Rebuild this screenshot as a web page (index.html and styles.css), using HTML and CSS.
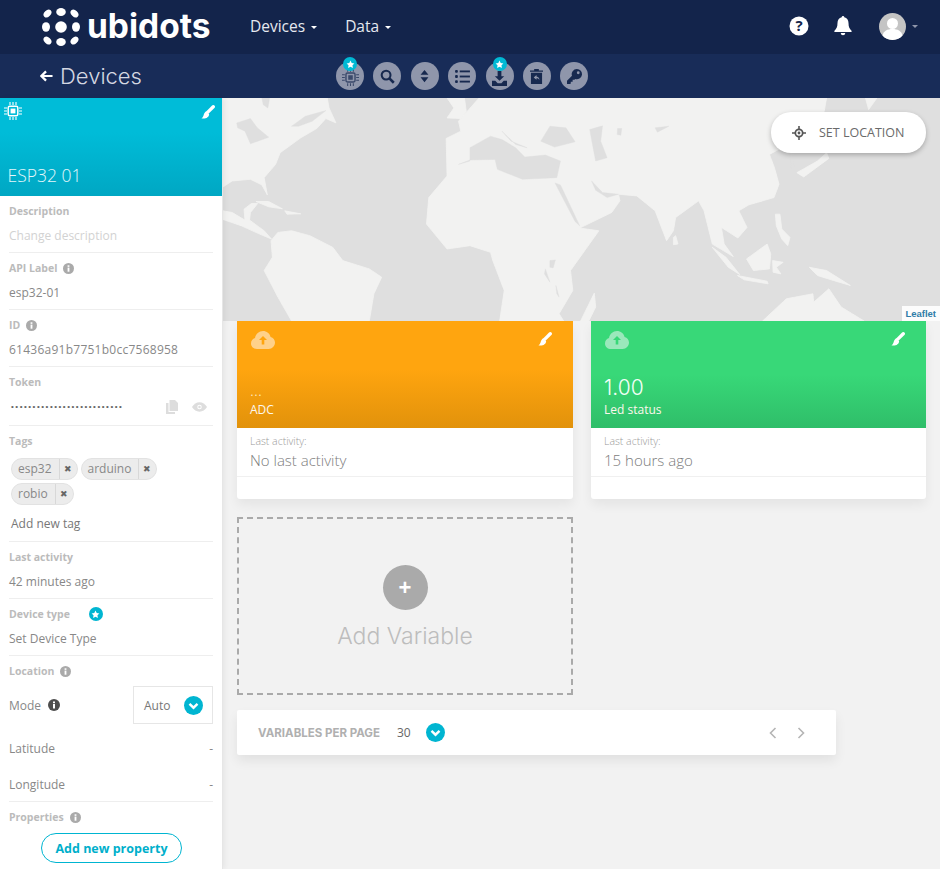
FILE: index.html
```html
<!DOCTYPE html>
<html lang="en">
<head>
<meta charset="utf-8">
<title>Devices</title>
<link rel="stylesheet" href="styles.css">
</head>
<body>
<svg class="defs" width="0" height="0" aria-hidden="true">
  <symbol id="brush" viewBox="0 0 16 16"><path d="M14 2L7.500 8.500" stroke="#fff" stroke-width="3.800" stroke-linecap="round" fill="none"/><path d="M5.800 7L9.300 10.500C9.300 13.800 5 16.500 .5 15.200 2.700 14 2.800 12 3.400 10.300 3.900 8.900 4.800 7.800 5.800 7Z" fill="#fff"/></symbol>
  <symbol id="info" viewBox="0 0 12 12"><circle cx="6" cy="6" r="6"/><rect x="5" y="5" width="2" height="4.500" fill="#fff"/><rect x="5" y="2.500" width="2" height="1.700" fill="#fff"/></symbol>
  <symbol id="star" viewBox="0 0 12 12"><path d="M6 .8l1.600 3.300 3.600.5-2.600 2.500.6 3.600L6 9l-3.200 1.700.6-3.600L.8 4.600l3.600-.5z"/></symbol>
  <symbol id="chev" viewBox="0 0 19 19"><circle cx="9.500" cy="9.500" r="9.500" fill="#00b5d1"/><path d="M5.500 7.800l4 3.900 4-3.900" fill="none" stroke="#fff" stroke-width="2.400"/></symbol>
  <symbol id="chip" viewBox="0 0 18 18"><rect x="4.200" y="4.200" width="9.600" height="9.600" rx="1.500" fill="none" stroke="currentColor" stroke-width="1.500"/><rect x="6.600" y="6.600" width="4.800" height="4.800" fill="currentColor"/><path d="M6 0v3M9 0v3M12 0v3M6 15v3M9 15v3M12 15v3M0 6h3M0 9h3M0 12h3M15 6h3M15 9h3M15 12h3" stroke="currentColor" stroke-width="1.100"/></symbol>
  <symbol id="cloud" viewBox="0 0 24 18"><path d="M6 18c-3.300 0-6-2.500-6-5.600 0-2.500 1.700-4.600 4-5.300C4.700 3 8 0 12 0c3.700 0 6.800 2.500 7.600 5.900 2.600.6 4.400 2.900 4.400 5.700 0 3.500-2.800 6.400-6.300 6.400z"/></symbol>
</svg>

<header class="topbar">
  <div class="logo">
    <svg class="logo-dots" viewBox="0 0 40 40" width="40" height="40" fill="#fff">
      <ellipse cx="6.500" cy="6.500" rx="4.500" ry="3.200" transform="rotate(-45 6.500 6.500)"/>
      <ellipse cx="20" cy="5" rx="4.800" ry="4"/>
      <ellipse cx="33.500" cy="6.500" rx="4.500" ry="3.200" transform="rotate(45 33.500 6.500)"/>
      <ellipse cx="5" cy="20" rx="4" ry="4.800"/>
      <circle cx="20" cy="20" r="5.800"/>
      <ellipse cx="35" cy="20" rx="4" ry="4.800"/>
      <ellipse cx="6.500" cy="33.500" rx="4.500" ry="3.200" transform="rotate(45 6.500 33.500)"/>
      <ellipse cx="20" cy="35" rx="4.800" ry="4"/>
      <ellipse cx="33.500" cy="33.500" rx="4.500" ry="3.200" transform="rotate(-45 33.500 33.500)"/>
    </svg>
    <span class="logo-text">ubidots</span>
  </div>
  <nav class="mainnav">
    <a class="navitem">Devices<i class="caret"></i></a>
    <a class="navitem">Data<i class="caret"></i></a>
  </nav>
  <div class="topright">
    <svg class="top-help" viewBox="0 0 20 20" width="20" height="20"><circle cx="10" cy="10" r="9.500" fill="#fff"/><text x="10" y="15" class="help-q">?</text></svg>
    <svg class="top-bell" viewBox="0 0 18 20" width="18" height="20" fill="#fff"><path d="M9 0c-.8 0-1.300.6-1.300 1.300C5 2 3.500 4.200 3.500 7c0 4.200-1.200 6-3 7.700-.4.400-.2 1.300.6 1.300h15.800c.8 0 1-.9.600-1.300-1.800-1.700-3-3.500-3-7.700 0-2.800-1.500-5-4.200-5.700C10.300.6 9.800 0 9 0zM6.800 17c0 1.300 1 2.300 2.200 2.300s2.200-1 2.200-2.300z"/></svg>
    <div class="avatar">
      <svg viewBox="0 0 27 27" width="27" height="27"><circle cx="13.500" cy="13.500" r="13.500" fill="#c4c4c4"/><circle cx="13.500" cy="10.500" r="5.500" fill="#fff"/><path d="M3.500 22.500c1-4.500 5-6.500 10-6.500s9 2 10 6.500a13.500 13.500 0 0 1-20 0z" fill="#fff"/></svg>
      <i class="caret caret-muted"></i>
    </div>
  </div>
</header>

<div class="subbar">
  <div class="back">
    <svg viewBox="0 0 14 12" width="13" height="12"><path d="M6.500 1L1.500 6l5 5M2 6h11.500" fill="none" stroke="#fff" stroke-width="2.400"/></svg>
    <span class="back-title">Devices</span>
  </div>
  <div class="tools">
    <span class="tool">
      <svg class="tool-ico tool-chip" width="17" height="17"><use href="#chip"/></svg>
      <span class="badge"><svg width="9" height="9" fill="#fff"><use href="#star"/></svg></span>
    </span>
    <span class="tool"><svg class="tool-ico" viewBox="0 0 16 16" width="15" height="15"><circle cx="6.500" cy="6.500" r="4.700" fill="none" stroke="currentColor" stroke-width="2.200"/><path d="M10 10l4.700 4.700" stroke="currentColor" stroke-width="2.800"/></svg></span>
    <span class="tool"><svg class="tool-ico" viewBox="0 0 10 16" width="9" height="14" fill="currentColor"><path d="M5 1l4.500 5.500h-9zM5 15L.5 9.500h9z"/></svg></span>
    <span class="tool"><svg class="tool-ico" viewBox="0 0 16 14" width="15" height="13" fill="currentColor"><rect x="0" y="0" width="3" height="3" rx="1"/><rect x="0" y="5.500" width="3" height="3" rx="1"/><rect x="0" y="11" width="3" height="3" rx="1"/><rect x="5" y=".5" width="11" height="2"/><rect x="5" y="6" width="11" height="2"/><rect x="5" y="11.500" width="11" height="2"/></svg></span>
    <span class="tool">
      <svg class="tool-ico tool-down" viewBox="0 0 16 16" width="15" height="15" fill="currentColor"><path d="M6 0h4v5.500h3L8 10.500 3 5.500h3zM0 10.500h3.500L6 13h4l2.500-2.500H16V16H0z"/></svg>
      <span class="badge"><svg width="9" height="9" fill="#fff"><use href="#star"/></svg></span>
    </span>
    <span class="tool"><svg class="tool-ico" viewBox="0 0 14 16" width="13" height="15" fill="currentColor"><path d="M0 1.500h4.500V0h5v1.500H14V3H0zM1 4h12v12H1zM7 6.500L4 9l3 2.500V10c1.500 0 2.500.5 3 2 .3-2.200-.8-3.700-3-4z" fill-rule="evenodd"/></svg></span>
    <span class="tool"><svg class="tool-ico" viewBox="0 0 16 16" width="15" height="15" fill="currentColor"><path d="M10.500 0a5.500 5.500 0 0 0-5.200 7.300L0 12.600V16h3.400l.6-.6V13.500h2v-2h2l.7-.8A5.500 5.500 0 1 0 10.500 0zm1.500 5.500a1.500 1.500 0 1 1 0-3 1.500 1.500 0 0 1 0 3z" fill-rule="evenodd"/></svg></span>
  </div>
</div>

<div class="page">
  <aside class="sidebar">
    <div class="device-head">
      <div class="head-icons">
        <svg class="head-chip" width="18" height="18"><use href="#chip"/></svg>
        <svg class="brush" width="14" height="14"><use href="#brush"/></svg>
      </div>
      <div class="device-name">ESP32 01</div>
    </div>
    <div class="fields">
      <section class="field">
        <div class="label">Description</div>
        <div class="value placeholder">Change description</div>
      </section>
      <section class="field">
        <div class="label">API Label <svg class="info" width="11" height="11"><use href="#info"/></svg></div>
        <div class="value">esp32-01</div>
      </section>
      <section class="field">
        <div class="label">ID <svg class="info" width="11" height="11"><use href="#info"/></svg></div>
        <div class="value value-id">61436a91b7751b0cc7568958</div>
      </section>
      <section class="field field-token">
        <div class="label">Token</div>
        <div class="value token">
          <span class="dots">••••••••••••••••••••••••••</span>
          <svg class="tok-copy" viewBox="0 0 12 14" width="12" height="14" fill="#ddd"><path d="M3.500 0H9l3 3v8H3.500z"/><path d="M0 3h2.500v9h6.500v2H0z"/></svg>
          <svg class="tok-eye" viewBox="0 0 16 10" width="15" height="10"><path d="M0 5c2-3 4.800-5 8-5s6 2 8 5c-2 3-4.800 5-8 5S2 8 0 5z" fill="#ddd"/><circle cx="8" cy="5" r="2.400" fill="#fff"/><circle cx="8" cy="5" r="1.300" fill="#ddd"/></svg>
        </div>
      </section>
      <section class="field field-tags">
        <div class="label">Tags</div>
        <div class="tags">
          <span class="tag"><span class="tag-name">esp32</span><span class="tag-x">✖</span></span>
          <span class="tag"><span class="tag-name">arduino</span><span class="tag-x">✖</span></span>
          <span class="tag"><span class="tag-name">robio</span><span class="tag-x">✖</span></span>
        </div>
        <div class="value addtag">Add new tag</div>
      </section>
      <section class="field">
        <div class="label">Last activity</div>
        <div class="value">42 minutes ago</div>
      </section>
      <section class="field">
        <div class="label">Device type <span class="type-star"><svg width="9" height="9" fill="#fff"><use href="#star"/></svg></span></div>
        <div class="value">Set Device Type</div>
      </section>
      <section class="field">
        <div class="label">Location <svg class="info" width="11" height="11"><use href="#info"/></svg></div>
        <div class="mode-row">
          <span class="value mode-name">Mode <svg class="info info-dark" width="12" height="12"><use href="#info"/></svg></span>
          <span class="mode-select"><span>Auto</span><svg width="19" height="19"><use href="#chev"/></svg></span>
        </div>
        <div class="coord"><span>Latitude</span><span>-</span></div>
        <div class="coord"><span>Longitude</span><span>-</span></div>
      </section>
      <section class="field field-props">
        <div class="label">Properties <svg class="info" width="11" height="11"><use href="#info"/></svg></div>
        <button class="add-prop">Add new property</button>
      </section>
    </div>
  </aside>

  <main class="main">
    <div class="map">
      <svg class="map-svg" viewBox="0 0 1568 672" preserveAspectRatio="none">
        <g class="land">
          <path d="M0 0H228L232 30 247 75 225 62 205 92 170 120 125 165 115 200 90 240 97 292 85 262 60 245 20 250 0 268Z"/>
          <path d="M0 340L20 345 48 368 46 335 62 318 76 318 60 345 58 368 90 400 106 425 80 410 40 385 0 366Z"/>
          <path d="M72 312L100 312 130 334 100 328Z"/>
          <path d="M135 340L170 349 140 350Z"/>
          <path d="M105 430L120 405 150 400 190 415 240 450 262 490 320 515 347 540 330 590 320 672H150L120 600 90 520 108 480Z"/>
          <path d="M490 0H528L532 40 522 62 490 60 505 30Z"/>
          <path d="M560 0H1320L1312 60 1262 110 1222 150 1195 170 1206 210 1216 260 1205 300 1150 322 1128 340 1146 390 1126 422 1090 390 1096 440 1116 478 1070 440 1052 340 1040 310 990 360 985 400 970 430 945 340 905 295 865 290 868 310 850 345 780 392 822 400 760 520 765 580 735 650 745 672H605L615 580 590 490 585 465 540 445 490 455 445 380 450 300 490 235 488 122 520 100 515 70Z"/>
          <path d="M1405 0H1430L1412 35Z"/>
          <path d="M1255 225L1300 190 1320 165 1325 182 1270 238Z"/>
          <path d="M1070 450L1100 480 1130 532 1105 510Z"/>
          <path d="M1125 535L1190 552 1192 560 1140 548Z"/>
          <path d="M1145 485L1190 440 1198 470 1195 515 1160 520Z"/>
          <path d="M1202 490L1225 495 1210 510 1220 530 1203 525Z"/>
          <path d="M1208 350L1218 350 1222 395 1240 420 1235 445 1222 425 1210 385Z"/>
          <path d="M1282 510L1320 520 1372 565 1335 550 1300 535Z"/>
          <path d="M1180 672L1232 605 1290 590 1292 615 1325 575 1352 630 1402 672Z"/>
          <path d="M782 672L812 588 815 630 800 672Z"/>
          <path d="M985 420L990 415 995 440 985 442Z"/>
        </g>
        <g class="water">
          <path d="M515 200L540 190 540 150 585 115 610 125 640 150 660 178 705 172 738 190 730 240 655 245 600 215 595 185 540 187Z"/>
          <path d="M610 100L640 140 665 150 630 130Z"/>
          <path d="M695 130L715 85 750 90 770 132 725 148Z"/>
          <path d="M802 95L830 84 826 130 840 180 815 190 808 140Z"/>
          <path d="M863 92L872 92 870 112 862 110Z"/>
          <path d="M945 90L975 85 950 103Z"/>
          <path d="M726 256L738 262 780 385 770 372Z"/>
          <path d="M806 250L830 285 865 290 840 300 815 278Z"/>
          <path d="M715 490L727 488 722 512 715 510Z"/>
          <path d="M728 565L735 600 730 590ZM705 515L715 555 703 530Z"/>
          <path d="M30 75L60 62 75 90 100 118 60 138 48 100 32 90Z"/>
          <path d="M150 85L180 55 225 38 195 70 165 85Z"/>
          <path d="M1240 170L1250 205 1243 212Z"/>
          <path d="M85 0H102L98 30 88 20Z"/>
        </g>
      </svg>
      <button class="set-loc">
        <svg viewBox="0 0 16 16" width="14" height="14"><circle cx="8" cy="8" r="4.200" fill="none" stroke="#555" stroke-width="2"/><circle cx="8" cy="8" r="1.600" fill="#555"/><path d="M8 0v3.500M8 12.500V16M0 8h3.500M12.500 8H16" stroke="#555" stroke-width="1.800"/></svg>
        <span>SET LOCATION</span>
      </button>
      <span class="leaflet">Leaflet</span>
    </div>

    <div class="cards">
      <article class="card">
        <div class="card-head head-orange">
          <div class="head-icons">
            <svg class="var-cloud" viewBox="0 0 24 18" width="24" height="18"><use href="#cloud" fill="#ffd18a" width="24" height="18"/><path d="M12 5l-4 4h2.700v4.500h2.600V9H16z" fill="#ffa50f"/></svg>
            <svg class="brush" width="14" height="14"><use href="#brush"/></svg>
          </div>
          <div class="var-value var-dots">...</div>
          <div class="var-name">ADC</div>
        </div>
        <div class="card-body">
          <div class="la-label">Last activity:</div>
          <div class="la-value">No last activity</div>
        </div>
        <div class="card-foot"></div>
      </article>
      <article class="card">
        <div class="card-head head-green">
          <div class="head-icons">
            <svg class="var-cloud" viewBox="0 0 24 18" width="24" height="18"><use href="#cloud" fill="#9ae8bb" width="24" height="18"/><path d="M12 5l-4 4h2.700v4.500h2.600V9H16z" fill="#38d878"/></svg>
            <svg class="brush" width="14" height="14"><use href="#brush"/></svg>
          </div>
          <div class="var-value">1.00</div>
          <div class="var-name">Led status</div>
        </div>
        <div class="card-body">
          <div class="la-label">Last activity:</div>
          <div class="la-value">15 hours ago</div>
        </div>
        <div class="card-foot"></div>
      </article>
      <div class="add-var">
        <span class="add-circle">+</span>
        <span class="add-text">Add Variable</span>
      </div>
    </div>

    <div class="pager">
      <span class="pager-label">VARIABLES PER PAGE</span>
      <span class="pager-num">30</span>
      <svg width="19" height="19"><use href="#chev"/></svg>
      <span class="pager-arrows">
        <svg viewBox="0 0 8 12" width="8" height="12"><path d="M6.500 1L1.500 6l5 5" fill="none" stroke="#b5b5b5" stroke-width="1.600"/></svg>
        <svg viewBox="0 0 8 12" width="8" height="12"><path d="M1.500 1l5 5-5 5" fill="none" stroke="#b5b5b5" stroke-width="1.600"/></svg>
      </span>
    </div>
  </main>
</div>
</body>
</html>
```

FILE: styles.css
```css
* { box-sizing: border-box; }
html, body { margin: 0; height: 100%; }
body {
  width: 940px;
  height: 869px;
  overflow: hidden;
  display: flex;
  flex-direction: column;
  background: #f2f2f2;
  font-family: "Open Sans", sans-serif;
  color: #777;
}
.defs { position: absolute; }

/* top bar */
.topbar {
  height: 54px;
  flex: none;
  display: flex;
  align-items: center;
  padding: 0 0 2px 41px;
  background: #13244b;
}
.logo { display: flex; align-items: center; width: 209px; }
.logo-dots { flex: none; margin-top: 1px; }
.logo-text {
  margin-left: 6px;
  font-family: "Inter", sans-serif;
  font-weight: 700;
  font-size: 33.500px;
  line-height: 40px;
  color: #fff;
}
.mainnav { display: flex; gap: 28px; }
.navitem {
  display: flex;
  align-items: center;
  font-size: 15.500px;
  color: #e6e9f0;
}
.caret {
  display: inline-block;
  width: 0;
  height: 0;
  margin-left: 6px;
  margin-top: 2px;
  border-left: 3.500px solid transparent;
  border-right: 3.500px solid transparent;
  border-top: 3.500px solid #fff;
}
.caret-muted { border-top-color: #8f96ab; margin-top: 0; }
.topright { margin-left: auto; display: flex; align-items: center; padding-right: 22px; }
.help-q { font: 700 15px "Open Sans", sans-serif; fill: #13244b; text-anchor: middle; }
.top-bell { margin-left: 25px; }
.avatar { display: flex; align-items: center; margin-left: 27px; }

/* sub bar */
.subbar {
  height: 44px;
  flex: none;
  display: flex;
  align-items: center;
  background: #182c58;
}
.back { width: 336px; flex: none; display: flex; align-items: center; padding-left: 40px; }
.back-title {
  margin-left: 7px;
  font-family: "Inter", sans-serif;
  font-weight: 300;
  font-size: 22px;
  color: #d4d8e2;
}
.tools { display: flex; gap: 9.400px; }
.tool {
  position: relative;
  width: 28px;
  height: 28px;
  border-radius: 50%;
  background: #8f96ab;
  display: flex;
  align-items: center;
  justify-content: center;
  color: #17294f;
}
.badge {
  position: absolute;
  top: -5px;
  left: 7px;
  width: 14px;
  height: 14px;
  border-radius: 50%;
  background: #00b9d4;
  display: flex;
  align-items: center;
  justify-content: center;
}
.tool-chip { margin-top: 3px; opacity: .7; }
.tool-down { margin-top: 4px; }

/* layout */
.page { flex: 1; display: flex; min-height: 0; }
.sidebar {
  width: 223px;
  flex: none;
  background: #fff;
  border-right: 1px solid #e6e6e6;
  box-shadow: 2px 0 5px rgba(0,0,0,.05);
  position: relative;
  z-index: 1;
}
.main { flex: 1; min-width: 0; }

/* device head */
.device-head {
  height: 98px;
  padding: 4px 6px 0 4px;
  display: flex;
  flex-direction: column;
  color: #fff;
  background: linear-gradient(#00bcd8 35%, #00a7c3);
}
.head-icons { display: flex; justify-content: space-between; align-items: flex-start; }
.head-chip { color: #fff; }
.device-head .brush { margin-top: 3px; margin-right: 1px; }
.device-name {
  margin-top: auto;
  padding: 0 0 9px 3.500px;
  font-size: 17.500px;
  line-height: 24px;
  font-weight: 300;
  color: #e4f7fb;
}

/* fields */
.fields { padding: 0 9px; }
.field { padding: 7px 0; border-bottom: 1px solid #eee; }
.field-token { padding-bottom: 9px; }
.field-tags { padding-bottom: 8px; }
.field-props { border-bottom: 0; }
.label {
  display: flex;
  align-items: center;
  gap: 5px;
  height: 16px;
  font-size: 10.500px;
  font-weight: 700;
  color: #bbbbbb;
}
.info { fill: #aaa; flex: none; margin-left: 1px; }
.info-dark { fill: #4d4d4d; margin-left: 4px; vertical-align: -1px; }
.value {
  margin-top: 8px;
  font-size: 12px;
  line-height: 18px;
  color: #888888;
}
.value-id { letter-spacing: .25px; }
.placeholder { color: #d2d2d2; }
.token { display: flex; align-items: center; }
.dots { font-size: 8px; letter-spacing: 1.520px; color: #666; flex: 1; font-family: "Liberation Sans", sans-serif; padding-left: 2px; }
.tok-copy { margin-right: 14px; }
.tok-eye { margin-right: 6px; }
.tags { display: flex; flex-wrap: wrap; gap: 3px; margin: 9px 0 0 2px; width: 160px; }
.tag {
  display: inline-flex;
  height: 22px;
  border-radius: 11px;
  background: #ececec;
  border: 1px solid #e2e2e2;
  font-size: 12px;
  line-height: 20px;
  color: #888888;
  overflow: hidden;
}
.tag-name { padding: 0 7px 0 6px; border-right: 1px solid #d8d8d8; }
.tag-x { padding: 0 5px 0 4px; font-size: 9px; color: #666; }
.addtag { margin: 10px 0 0 2px; color: #777; }
.type-star {
  width: 14px;
  height: 14px;
  margin-left: 14px;
  border-radius: 50%;
  background: #00b5d1;
  display: flex;
  align-items: center;
  justify-content: center;
}
.mode-row { display: flex; align-items: center; justify-content: space-between; margin-top: 7px; height: 38px; }
.mode-name { margin-top: 1px; }
.mode-select {
  width: 80px;
  height: 38px;
  border: 1px solid #e6e6e6;
  display: flex;
  align-items: center;
  justify-content: space-between;
  padding: 0 9px 0 10px;
  font-size: 12px;
  color: #777;
}
.coord {
  display: flex;
  justify-content: space-between;
  height: 18px;
  margin-top: 18px;
  font-size: 12px;
  line-height: 18px;
  color: #888888;
}
.mode-row + .coord { margin-top: 16px; }
.add-prop {
  display: block;
  width: 141px;
  height: 30px;
  margin: 8px 0 0 32px;
  padding: 0;
  border: 1px solid #00b5d1;
  border-radius: 15px;
  background: #fff;
  font: 700 12.500px "Open Sans", sans-serif;
  color: #00afcb;
}

/* map */
.map { position: relative; height: 223px; background: #dfdfdf; overflow: hidden; }
.map-svg { display: block; width: 100%; height: 223px; filter: blur(.6px); }
.land { fill: #f2f2f1; stroke: #f2f2f1; stroke-width: 2; stroke-linejoin: round; }
.water { fill: #dfdfdf; stroke: #dfdfdf; stroke-width: 1; stroke-linejoin: round; }
.set-loc {
  position: absolute;
  top: 14px;
  right: 14px;
  width: 155px;
  height: 41px;
  padding: 0 0 0 21px;
  display: flex;
  align-items: center;
  gap: 13px;
  border: 0;
  border-radius: 20px;
  background: #fff;
  box-shadow: 0 2px 5px rgba(0,0,0,.25);
  font: 400 12.500px "Open Sans", sans-serif;
  color: #6a6a6a;
}
.leaflet {
  position: absolute;
  right: 0;
  bottom: 0;
  padding: 1px 4px 0 3px;
  height: 15px;
  font: 700 9.500px/14px "Liberation Sans", sans-serif;
  color: #2f7ca8;
  background: rgba(255,255,255,.9);
}

/* cards */
.cards {
  display: grid;
  grid-template-columns: 336px 335px;
  gap: 18px;
  padding-left: 14px;
}
.card {
  height: 178px;
  background: #fff;
  border-radius: 0 0 3px 3px;
  box-shadow: 0 6px 12px rgba(0,0,0,.06);
  display: flex;
  flex-direction: column;
}
.card-head {
  height: 107px;
  padding: 10px 21px 0 13px;
  display: flex;
  flex-direction: column;
  color: #fff;
}
.var-cloud { margin-left: 1px; }
.head-orange { background: linear-gradient(#ffa50f 45%, #e2920b); }
.head-green { background: linear-gradient(#38d878 50%, #2fbe69); }
.card-head .brush { margin-top: 1px; }
.var-value {
  margin-top: auto;
  font-family: "Inter", sans-serif;
  font-weight: 300;
  font-size: 21px;
  line-height: 26px;
  color: #f3fff8;
}
.var-dots { font-size: 14px; line-height: 16px; margin-bottom: 2px; color: #ffe9c6; }
.var-name { font-size: 12px; line-height: 18px; padding-bottom: 9px; color: #fdf7ec; }
.card-body { height: 49px; padding: 6px 13px 0; border-bottom: 1px solid #f0f0f0; }
.la-label { font-size: 10.500px; line-height: 14px; font-weight: 300; color: #9a9a9a; }
.la-value { font-size: 15px; line-height: 24px; font-weight: 300; color: #7c7c7c; }
.card-foot { flex: 1; }
.add-var {
  height: 178px;
  border: 2px dashed #aaa;
  display: flex;
  flex-direction: column;
  align-items: center;
  padding-top: 46px;
}
.add-circle {
  width: 45px;
  height: 45px;
  border-radius: 50%;
  background: #aaaaaa;
  display: flex;
  align-items: center;
  justify-content: center;
  font: 700 22px "Liberation Sans", sans-serif;
  color: #fff;
}
.add-text {
  margin-top: 10px;
  font-family: "Inter", sans-serif;
  font-weight: 300;
  font-size: 23px;
  line-height: 32px;
  color: #bdbdbd;
}

/* pager */
.pager {
  width: 599px;
  height: 45px;
  margin: 15px 0 0 14px;
  padding: 0 31px 0 21px;
  display: flex;
  align-items: center;
  background: #fff;
  border-radius: 2px;
  box-shadow: 0 6px 12px rgba(0,0,0,.07);
}
.pager-label {
  font-family: "Inter", sans-serif;
  font-weight: 700;
  font-size: 11.500px;
  color: #b0b0b0;
}
.pager-num { margin: 0 15px 0 17px; font-size: 12px; color: #666; }
.pager-arrows { margin-left: auto; display: flex; gap: 20px; }
```
